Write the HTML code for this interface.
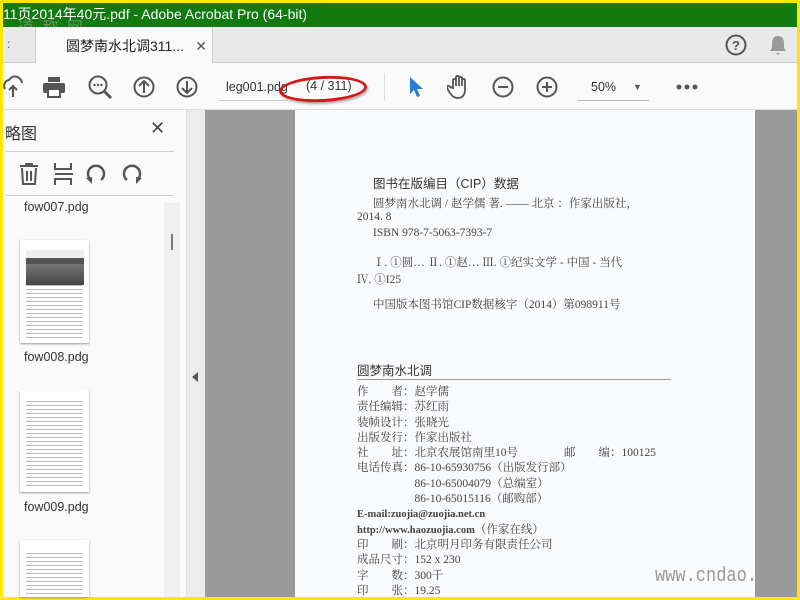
<!DOCTYPE html>
<html><head><meta charset="utf-8"><style>
*{margin:0;padding:0;box-sizing:border-box}
body{width:800px;height:600px;overflow:hidden;background:#ffe800;position:relative;font-family:"Liberation Sans","Noto Sans CJK SC",sans-serif}
.a{position:absolute}
.title{left:3px;top:3px;width:794px;height:24px;background:#117a11;color:#fff;font-size:14px;line-height:22px;white-space:nowrap;overflow:hidden}
.tabs{left:3px;top:27px;width:794px;height:36px;background:#e9e9e9;border-bottom:1px solid #ccc}
.tab{left:32px;top:0;width:178px;height:36px;background:#fafafa;border-left:1px solid #ccc;border-right:1px solid #ccc;font-size:14px;color:#222;line-height:38px;padding-left:30px}
.tb{left:3px;top:63px;width:794px;height:47px;background:#fafafa;border-bottom:1px solid #ddd}
.left{left:3px;top:110px;width:183px;height:487px;background:#fafafa}
.strip{left:186px;top:110px;width:19px;height:487px;background:#ececec;border-left:1px solid #ddd}
.gray{left:205px;top:110px;width:592px;height:487px;background:#9a9a9a}
.page{left:295px;top:110px;width:460px;height:487px;background:#f9fafc}
.pt{font-family:"Liberation Serif","Noto Serif CJK SC",serif;color:#444;font-size:11.5px;white-space:nowrap}
.thumb{left:20px;width:69px;background:#fff;box-shadow:0 1px 2px #999;
background-image:repeating-linear-gradient(#fff 0 3px,#bbb 3px 4px);background-size:56px 100%;background-repeat:no-repeat;background-position:6px 0}
.lbl{left:24px;font-size:12.5px;color:#333}
</style></head><body>
<div class="a title">11页2014年40元.pdf - Adobe Acrobat Pro (64-bit)</div>
<div class="a" style="left:18px;top:14px;color:#7a9a7a;font-size:16px;letter-spacing:2px;opacity:.8">道 称 网</div>
<div class="a tabs">
 <div class="a" style="left:4px;top:10px;color:#555;font-size:12px">:</div>
 <div class="a tab">圆梦南水北调311...<span style="position:absolute;right:5px;top:0;font-size:14px;color:#555">✕</span></div>
 <svg class="a" style="left:722px;top:7px" width="22" height="22"><circle cx="11" cy="11" r="9.5" fill="none" stroke="#555" stroke-width="2"/><text x="11" y="16" text-anchor="middle" font-size="13" font-weight="bold" fill="#555" font-family="Liberation Sans">?</text></svg>
 <svg class="a" style="left:765px;top:7px" width="20" height="22"><path d="M10 2c-4 0-6 3-6 7v5l-2 3h16l-2-3V9c0-4-2-7-6-7z M8 19h4l-2 2z" fill="#999"/></svg>
</div>
<div class="a tb">
 <svg class="a" style="left:0;top:12px" width="22" height="24"><path d="M2 14a6 6 0 0 1 4-9a7 7 0 0 1 13 3M10 22V11M6 15l4-4 4 4" fill="none" stroke="#555" stroke-width="2"/></svg>
 <svg class="a" style="left:39px;top:13px" width="24" height="22"><rect x="6" y="1" width="12" height="5" fill="#555"/><rect x="1" y="7" width="22" height="10" rx="2" fill="#555"/><rect x="6" y="13" width="12" height="8" fill="#fff" stroke="#555" stroke-width="2"/></svg>
 <svg class="a" style="left:85px;top:12px" width="26" height="26"><circle cx="10" cy="10" r="8.5" fill="none" stroke="#555" stroke-width="2"/><path d="M16 16l7 7" stroke="#555" stroke-width="3"/><circle cx="6.5" cy="10" r="1.2" fill="#555"/><circle cx="10" cy="10" r="1.2" fill="#555"/><circle cx="13.5" cy="10" r="1.2" fill="#555"/></svg>
 <svg class="a" style="left:130px;top:13px" width="22" height="22"><circle cx="11" cy="11" r="9.5" fill="none" stroke="#555" stroke-width="2"/><path d="M11 17V5M6 10l5-5 5 5" fill="none" stroke="#555" stroke-width="2"/></svg>
 <svg class="a" style="left:173px;top:13px" width="22" height="22"><circle cx="11" cy="11" r="9.5" fill="none" stroke="#555" stroke-width="2"/><path d="M11 5v12M6 12l5 5 5-5" fill="none" stroke="#555" stroke-width="2"/></svg>
 <div class="a" style="left:215px;top:14px;width:70px;height:24px;border-bottom:1px solid #ccc;font-size:12.5px;color:#333;padding-left:8px;line-height:20px">leg001.pdg</div>
 <div class="a" style="left:303px;top:16px;font-size:12.5px;color:#333">(4 / 311)</div>
 <div class="a" style="left:276px;top:13px;width:88px;height:26px;border:3px solid #d41818;border-radius:50%;transform:rotate(-3deg);box-shadow:1px 2px 2px #aaa"></div>
 <div class="a" style="left:381px;top:10px;width:1px;height:28px;background:#ddd"></div>
 <svg class="a" style="left:405px;top:13px" width="16" height="22"><path d="M2 1v17l4-4 3 7 3-1-3-7h6z" fill="#2f7ad1"/></svg>
 <svg class="a" style="left:444px;top:11px" width="26" height="26"><path d="M6 14V6a1.6 1.6 0 0 1 3 0v6V3a1.6 1.6 0 0 1 3 0v9V4a1.6 1.6 0 0 1 3 0v8V6a1.6 1.6 0 0 1 3 0v10c0 5-3 8-7 8s-6-2-8-5l-3-5a1.5 1.5 0 0 1 3-1z" fill="none" stroke="#555" stroke-width="1.8"/></svg>
 <svg class="a" style="left:489px;top:13px" width="22" height="22"><circle cx="11" cy="11" r="9.5" fill="none" stroke="#555" stroke-width="2"/><path d="M6 11h10" stroke="#555" stroke-width="2"/></svg>
 <svg class="a" style="left:533px;top:13px" width="22" height="22"><circle cx="11" cy="11" r="9.5" fill="none" stroke="#555" stroke-width="2"/><path d="M6 11h10M11 6v10" stroke="#555" stroke-width="2"/></svg>
 <div class="a" style="left:575px;top:14px;width:71px;height:24px;border-bottom:1px solid #bbb;font-size:12.5px;color:#333;padding-left:13px;line-height:20px">50%<span style="position:absolute;left:55px;top:0;font-size:9px;color:#555">▼</span></div>
 <svg class="a" style="left:672px;top:20px" width="24" height="8"><circle cx="4" cy="4" r="2.5" fill="#555"/><circle cx="12" cy="4" r="2.5" fill="#555"/><circle cx="20" cy="4" r="2.5" fill="#555"/></svg>
</div>
<div class="a left">
 <div class="a" style="left:2px;top:10px;font-size:16px;color:#333">略图</div>
 <div class="a" style="left:147px;top:8px;font-size:18px;color:#444">✕</div>
 <div class="a" style="left:2px;top:41px;width:169px;height:1px;background:#ccc"></div>
 <svg class="a" style="left:15px;top:52px" width="22" height="24"><path d="M2 4h18M8 4V2h6v2M4 6l1 16h12l1-16M9 9v10M13 9v10" fill="none" stroke="#555" stroke-width="2"/></svg>
 <svg class="a" style="left:50px;top:52px" width="22" height="24"><path d="M2 1v6h16V1M2 23v-6h16v6M2 12h18" fill="none" stroke="#555" stroke-width="2"/></svg>
 <svg class="a" style="left:82px;top:52px" width="24" height="24"><path d="M6 18a8 8 0 1 1 10 0" fill="none" stroke="#555" stroke-width="2.5"/><path d="M1 16l6-1v7z" fill="#555"/></svg>
 <svg class="a" style="left:116px;top:52px" width="24" height="24"><path d="M18 18a8 8 0 1 0-10 0" fill="none" stroke="#555" stroke-width="2.5"/><path d="M23 16l-6-1v7z" fill="#555"/></svg>
 <div class="a" style="left:2px;top:85px;width:169px;height:1px;background:#ccc"></div>
 <div class="a" style="left:161px;top:93px;width:16px;height:394px;background:#f0f0f0"></div>
 <div class="a" style="left:168px;top:124px;width:2px;height:16px;background:#777"></div>
</div>
<div class="a lbl" style="top:200px">fow007.pdg</div>
<div class="a thumb" style="top:240px;height:103px;background-position:6px 38px;background-size:56px 60px">
 <div style="position:absolute;left:6px;top:10px;width:58px;height:35px;background:linear-gradient(#eee 0 8px,#555 8px 14px,#777 14px,#444)"></div>
</div>
<div class="a lbl" style="top:350px">fow008.pdg</div>
<div class="a thumb" style="top:390px;height:102px;background-position:6px 8px;background-size:56px 88px"></div>
<div class="a lbl" style="top:500px">fow009.pdg</div>
<div class="a thumb" style="top:540px;height:57px;background-position:6px 10px"></div>
<div class="a strip"><div class="a" style="left:5px;top:262px;width:0;height:0;border-top:5px solid transparent;border-bottom:5px solid transparent;border-right:6px solid #555"></div></div>
<div class="a gray"></div>
<div class="a page">
 <div class="a pt" style="left:78px;top:63px;font-family:'Liberation Sans','Noto Sans CJK SC',sans-serif;font-size:12.5px;color:#333">图书在版编目（CIP）数据</div>
 <div class="a pt" style="left:78px;top:85px">圆梦南水北调 / 赵学儒 著. —— 北京 ：作家出版社，</div>
 <div class="a pt" style="left:62px;top:101px">2014. 8</div>
 <div class="a pt" style="left:78px;top:117px">ISBN  978-7-5063-7393-7</div>
 <div class="a pt" style="left:78px;top:144px">Ⅰ. ①圆…  Ⅱ. ①赵…  Ⅲ. ①纪实文学 - 中国 - 当代</div>
 <div class="a pt" style="left:62px;top:161px">Ⅳ. ①I25</div>
 <div class="a pt" style="left:78px;top:186px">中国版本图书馆CIP数据核字（2014）第098911号</div>
 <div class="a pt" style="left:62px;top:250px;font-family:'Liberation Sans','Noto Sans CJK SC',sans-serif;font-size:12.5px;color:#333">圆梦南水北调</div>
 <div class="a" style="left:62px;top:269px;width:314px;height:1px;background:#999"></div>
 <div class="a pt" style="left:62px;top:275px;line-height:15.3px">作　　者：赵学儒<br>责任编辑：苏红雨<br>装帧设计：张晓光<br>出版发行：作家出版社<br>社　　址：北京农展馆南里10号　　　　邮　　编：100125<br>电话传真：86-10-65930756（出版发行部）<br>　　　　　86-10-65004079（总编室）<br>　　　　　86-10-65015116（邮购部）<br><b style="font-size:10.5px">E-mail:zuojia@zuojia.net.cn</b><br><b style="font-size:10.5px">http://www.haozuojia.com</b>（作家在线）<br>印　　刷：北京明月印务有限责任公司<br>成品尺寸：152 x 230<br>字　　数：300千<br>印　　张：19.25</div>
 <div class="a" style="left:360px;top:455px;font-family:'Liberation Mono',monospace;font-size:20px;color:#999;transform:scaleX(.85);transform-origin:left">www.cndao.</div>
</div>
</body></html>
